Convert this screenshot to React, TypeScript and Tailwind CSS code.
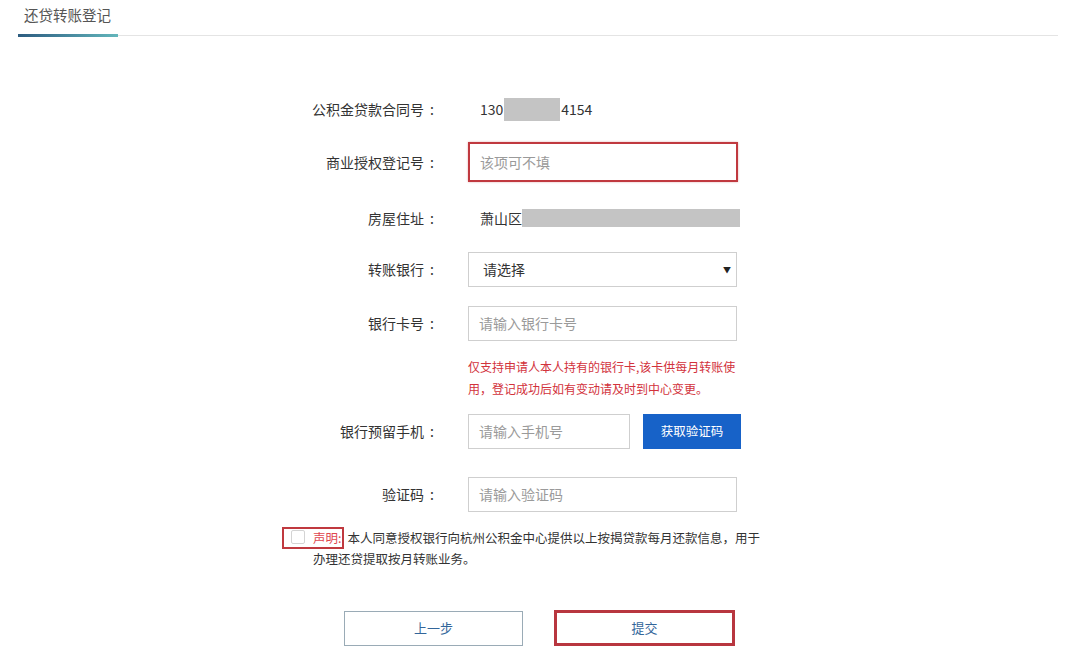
import React from "react";

const font = { fontFamily: '"Noto Sans CJK SC", "Noto Sans", sans-serif' };

function Label({ children }: { children: React.ReactNode }) {
  return (
    <div className="flex w-[160px] shrink-0 justify-end text-[14px] text-[#333]">
      <span>{children}</span>
      <span className="w-[16px] text-center">:</span>
    </div>
  );
}

function Row({ label, children, className = "" }: { label: string; children: React.ReactNode; className?: string }) {
  return (
    <div className={`flex items-center gap-[28px] ${className}`}>
      <Label>{label}</Label>
      {children}
    </div>
  );
}

function TextInput({ placeholder, className = "" }: { placeholder: string; className?: string }) {
  return (
    <div
      className={`flex h-[35px] items-center border border-[#cfcfcf] bg-white pl-[10px] text-[14px] text-[#9a9a9a] ${className}`}
    >
      {placeholder}
    </div>
  );
}

export default function App() {
  return (
    <div className="h-[659px] w-[1080px] overflow-hidden bg-white" style={font}>
      {/* tab header */}
      <div className="px-[18px]">
        <div className="pl-[6px] pt-[3px] text-[14.5px] leading-[24px] text-[#555]">还贷转账登记</div>
        <div className="mt-[7px] flex h-[3px] w-[1040px] items-center">
          <div className="h-[3px] w-[100px] bg-gradient-to-r from-[#2d5c80] to-[#63b6bb]" />
          <div className="h-px flex-1 bg-[#e4e4e4]" />
        </div>
      </div>

      <div className="pl-[280px]">
        <Row label="公积金贷款合同号" className="mt-[54px] h-[36px]">
          <div className="flex items-center pl-[12px] text-[14px] text-[#333]">
            <span>130</span>
            <span className="mx-[1px] h-[23px] w-[56px] bg-[#c4c4c4]" />
            <span>4154</span>
          </div>
        </Row>

        <Row label="商业授权登记号" className="mt-[15px] h-[40px]">
          <div className="flex h-[40px] w-[270px] items-center border-2 border-[#c0393f] bg-white pl-[10px] text-[14px] text-[#9a9a9a] shadow-[0_0_2px_rgba(192,57,63,0.4)]">
            该项可不填
          </div>
        </Row>

        <Row label="房屋住址" className="mt-[18px] h-[36px]">
          <div className="flex items-center pl-[12px] text-[14px] text-[#333]">
            <span>萧山区</span>
            <span className="h-[18px] w-[218px] bg-[#c4c4c4]" />
          </div>
        </Row>

        <Row label="转账银行" className="mt-[16px] h-[35px]">
          <div className="flex h-[35px] w-[269px] items-center justify-between border border-[#cfcfcf] bg-white pl-[14px] pr-[5px] text-[14px] text-[#333]">
            <span>请选择</span>
            <span className="text-[8px] text-[#222]">▼</span>
          </div>
        </Row>

        <Row label="银行卡号" className="mt-[19px] h-[35px]">
          <TextInput placeholder="请输入银行卡号" className="w-[269px]" />
        </Row>

        <div className="mt-[15px] pl-[188px] text-[12px] leading-[22px] text-[#d2323c]">
          仅支持申请人本人持有的银行卡,该卡供每月转账使
          <br />
          用，登记成功后如有变动请及时到中心变更。
        </div>

        <Row label="银行预留手机" className="mt-[14px] h-[35px]">
          <div className="flex items-center gap-[13px]">
            <TextInput placeholder="请输入手机号" className="w-[162px]" />
            <button className="h-[35px] w-[98px] bg-[#1762c8] text-[12.5px] text-white">获取验证码</button>
          </div>
        </Row>

        <Row label="验证码" className="mt-[28px] h-[35px]">
          <TextInput placeholder="请输入验证码" className="w-[269px]" />
        </Row>

        <div className="relative mt-[15px] flex items-start">
          <div className="absolute left-[2px] top-[0px] h-[22px] w-[62px] border-2 border-[#c0393f]" />
          <div className="ml-[11px] mt-[3px] h-[14px] w-[14px] shrink-0 rounded-[2px] border border-[#d4d4d4] bg-white" />
          <p className="ml-[8px] w-[460px] text-[12.5px] leading-[21px] text-[#333]">
            <span className="text-[#e0474f]">声明:</span>
            <span className="ml-[6px]">本人同意授权银行向杭州公积金中心提供以上按揭贷款每月还款信息，用于</span>
            <br />
            办理还贷提取按月转账业务。
          </p>
        </div>

        <div className="mt-[41px] flex items-center">
          <button className="ml-[64px] h-[35px] w-[179px] border border-[#9aabb6] bg-white text-[13px] text-[#33669a]">
            上一步
          </button>
          <button className="ml-[31px] h-[36px] w-[181px] border-[3px] border-[#b8363f] bg-white text-[13px] text-[#33669a]">
            提交
          </button>
        </div>
      </div>
    </div>
  );
}
